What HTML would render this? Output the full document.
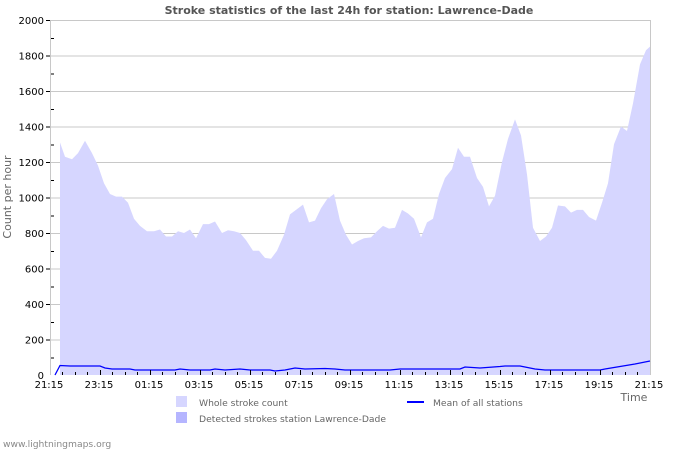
<!DOCTYPE html>
<html><head><meta charset="utf-8"><style>
html,body{margin:0;padding:0;background:#fff;width:700px;height:450px;overflow:hidden}
svg text{font-family:"DejaVu Sans","Liberation Sans",sans-serif}
</style></head><body>
<svg width="700" height="450" viewBox="0 0 700 450" xmlns="http://www.w3.org/2000/svg">
<text x="349" y="14" text-anchor="middle" font-size="11" font-weight="bold" fill="#555">Stroke statistics of the last 24h for station: Lawrence-Dade</text>
<g stroke="#c8c8c8" stroke-width="1">
<line x1="50" y1="20.5" x2="650" y2="20.5"/><line x1="50" y1="56" x2="650" y2="56"/><line x1="50" y1="91.5" x2="650" y2="91.5"/><line x1="50" y1="127" x2="650" y2="127"/><line x1="50" y1="162.5" x2="650" y2="162.5"/><line x1="50" y1="198" x2="650" y2="198"/><line x1="50" y1="233.5" x2="650" y2="233.5"/><line x1="50" y1="269" x2="650" y2="269"/><line x1="50" y1="304.5" x2="650" y2="304.5"/><line x1="50" y1="340" x2="650" y2="340"/>
<line x1="650.5" y1="20" x2="650.5" y2="375"/><line x1="50.5" y1="20" x2="50.5" y2="375"/>
</g>
<polygon fill="#d6d6ff" points="60,375 60,142.5 65,156.7 72,159.3 78,153.1 85,140.7 92,153.1 98,165.6 104,183.3 110,194 116,196.6 122,196.6 128,202.8 134,218.8 140,225.9 147,231.2 154,231.2 160,229.5 166,236.5 172,236.5 178,231.2 184,233 190,229.5 196,238.3 203,224.1 209,224.1 215,221.5 222,233 228,230.3 234,231.2 240,233 246,240.1 253,250.8 259,250.8 265,257.9 271,258.7 277,250.8 284,234.8 290,214.4 296,209.9 303,204.6 309,222.4 315,220.6 321,208.2 327,199.3 334,194 340,220.6 346,234.8 352,244.5 358,241 364,238.3 371,237.4 377,231.2 383,225.9 389,228.6 395,227.7 402,209.9 408,213.5 414,218.8 421,237.4 427,222.4 433,218.8 439,194 445,178 452,169.1 458,147.8 464,156.7 470,156.7 477,178 483,186.9 489,206.4 495,195.7 502,162 508,138.9 515,119.4 521,135.4 527,174.4 533,227.7 540,241 546,236.5 552,227.7 558,205.5 565,206.4 571,212.6 577,209.9 583,209.9 589,217 596,220.6 602,202.8 608,183.3 614,144.3 621,126.5 627,131 633,103.4 640,64.4 646,50.2 650,46.6 650,375"/>
<polyline fill="none" stroke="#0000ff" stroke-width="1.3" points="55,375 60,365.5 70,366 100,366 105,368 112,369 130,369 135,370 175,370 180,369 190,370 210,370 215,369 225,370 240,369 250,370 270,370 275,371 285,370 295,368 305,369 325,368.5 335,369 345,370 390,370 400,369 460,369 465,367 480,368 500,366.5 505,366 520,366 525,367 535,369 545,370 600,370 605,369 620,366.5 635,364 650,361"/>
<g stroke="#000" stroke-width="1">
<line x1="46" y1="20.5" x2="50" y2="20.5"/><line x1="46" y1="56" x2="50" y2="56"/><line x1="46" y1="91.5" x2="50" y2="91.5"/><line x1="46" y1="127" x2="50" y2="127"/><line x1="46" y1="162.5" x2="50" y2="162.5"/><line x1="46" y1="198" x2="50" y2="198"/><line x1="46" y1="233.5" x2="50" y2="233.5"/><line x1="46" y1="269" x2="50" y2="269"/><line x1="46" y1="304.5" x2="50" y2="304.5"/><line x1="46" y1="340" x2="50" y2="340"/>
<line x1="51" y1="38.5" x2="54" y2="38.5"/><line x1="51" y1="74" x2="54" y2="74"/><line x1="51" y1="109.5" x2="54" y2="109.5"/><line x1="51" y1="145" x2="54" y2="145"/><line x1="51" y1="180.5" x2="54" y2="180.5"/><line x1="51" y1="216" x2="54" y2="216"/><line x1="51" y1="251.5" x2="54" y2="251.5"/><line x1="51" y1="287" x2="54" y2="287"/><line x1="51" y1="322.5" x2="54" y2="322.5"/><line x1="51" y1="358" x2="54" y2="358"/>
</g>
<path stroke="#000" fill="none" d="M100.5 375v-5M150.5 375v-5M200.5 375v-5M250.5 375v-5M300.5 375v-5M350.5 375v-5M400.5 375v-5M450.5 375v-5M500.5 375v-5M550.5 375v-5M600.5 375v-5M62.5 375v-3M75.5 375v-3M87.5 375v-3M112.5 375v-3M125.5 375v-3M137.5 375v-3M162.5 375v-3M175.5 375v-3M187.5 375v-3M212.5 375v-3M225.5 375v-3M237.5 375v-3M262.5 375v-3M275.5 375v-3M287.5 375v-3M312.5 375v-3M325.5 375v-3M337.5 375v-3M362.5 375v-3M375.5 375v-3M387.5 375v-3M412.5 375v-3M425.5 375v-3M437.5 375v-3M462.5 375v-3M475.5 375v-3M487.5 375v-3M512.5 375v-3M525.5 375v-3M537.5 375v-3M562.5 375v-3M575.5 375v-3M587.5 375v-3M612.5 375v-3M625.5 375v-3M637.5 375v-3"/>
<g font-size="10" fill="#000" text-anchor="end">
<text x="44" y="24">2000</text><text x="44" y="59.5">1800</text><text x="44" y="95">1600</text><text x="44" y="130.5">1400</text><text x="44" y="166">1200</text><text x="44" y="201.5">1000</text><text x="44" y="237">800</text><text x="44" y="272.5">600</text><text x="44" y="308">400</text><text x="44" y="343.5">200</text><text x="44" y="379">0</text>
</g>
<g font-size="10" fill="#000" text-anchor="middle">
<text x="49" y="388">21:15</text><text x="99" y="388">23:15</text><text x="149" y="388">01:15</text><text x="199" y="388">03:15</text><text x="249" y="388">05:15</text><text x="299" y="388">07:15</text><text x="349" y="388">09:15</text><text x="399" y="388">11:15</text><text x="449" y="388">13:15</text><text x="499" y="388">15:15</text><text x="549" y="388">17:15</text><text x="599" y="388">19:15</text><text x="649" y="388">21:15</text>
</g>
<text x="634" y="401" font-size="11" fill="#666" text-anchor="middle">Time</text>
<text transform="translate(11,197) rotate(-90)" font-size="11" fill="#666" text-anchor="middle">Count per hour</text>
<rect x="176" y="396" width="11" height="11" fill="#d6d6ff"/>
<rect x="176" y="412" width="11" height="11" fill="#b5b5ff"/>
<text x="199" y="406" font-size="9.2" fill="#666">Whole stroke count</text>
<text x="199" y="422" font-size="9.2" fill="#666">Detected strokes station Lawrence-Dade</text>
<line x1="407" y1="402" x2="424" y2="402" stroke="#0000ff" stroke-width="2"/>
<text x="433" y="406" font-size="9.2" fill="#666">Mean of all stations</text>
<text x="3" y="447" font-size="9.2" fill="#888">www.lightningmaps.org</text>
</svg>
</body></html>
